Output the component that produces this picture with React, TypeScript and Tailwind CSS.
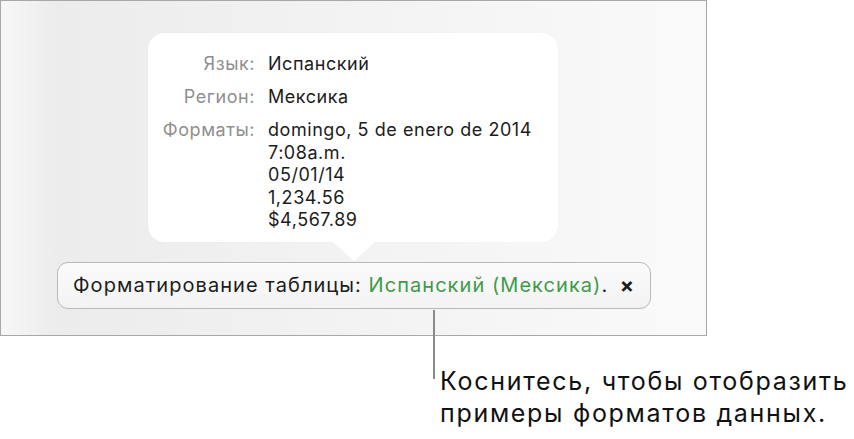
const rows = [
  { label: "Язык:", values: ["Испанский"] },
  { label: "Регион:", values: ["Мексика"] },
  {
    label: "Форматы:",
    values: ["domingo, 5 de enero de 2014", "7:08a.m.", "05/01/14", "1,234.56", "$4,567.89"],
  },
];

const App = () => {
  return (
    <div className="relative w-[854px] h-[439px] bg-white font-['Inter','Liberation_Sans',sans-serif] overflow-hidden">
      {/* screen area */}
      <div className="w-[707px] h-[336px] border border-[#a8a8a8] bg-[linear-gradient(90deg,#f7f7f7_0%,#ececec_8%,#f1f1f1_40%,#fafafa_100%)] pt-[32px]">
        <div className="relative ml-[147px] w-[410px] rounded-[16px] bg-white pt-[20px] pb-[10px] shadow-[0_0_1px_rgba(0,0,0,0.08)]">
          {rows.map((row, i) => (
            <div
              key={row.label}
              className={`flex text-[18px] leading-[22.5px] tracking-[0.55px] ${i === 1 ? "mt-[10px]" : ""} ${i === 2 ? "mt-[11px]" : ""}`}
            >
              <div className="w-[107px] text-right text-[#8f8f8f]">{row.label}</div>
              <div className="ml-[13px] flex flex-col text-[#1c1c1c]">
                {row.values.map((v) => (
                  <span key={v}>{v}</span>
                ))}
              </div>
            </div>
          ))}
          <div className="absolute left-[185px] top-full w-0 h-0 border-l-[21px] border-r-[21px] border-t-[19px] border-l-transparent border-r-transparent border-t-white" />
        </div>

        <div className="ml-[56px] mt-[20px] w-[594px] h-[47px] rounded-[11px] border border-[#b9b9b9] bg-[linear-gradient(180deg,#fbfbfb,#f3f3f3)] flex items-center pl-[15px] pr-[16px] text-[20px] tracking-[1.05px] text-[#1c1c1c] whitespace-nowrap">
          <span>Форматирование таблицы:&nbsp;</span>
          <span className="text-[#3f9b4a]">Испанский (Мексика)</span>
          <span>.</span>
          <span className="ml-auto text-[21px] font-bold leading-none tracking-normal">×</span>
        </div>
      </div>

      {/* callout */}
      <div className="absolute left-[433px] top-[310px] w-[2px] h-[69px] bg-[#8a8a8a]" />
      <div className="ml-[440px] mt-[30px] text-[25px] leading-[31.5px] tracking-[1.7px] text-[#111] whitespace-nowrap">
        <div>Коснитесь, чтобы отобразить</div>
        <div>примеры форматов данных.</div>
      </div>
    </div>
  );
};

export default App;
